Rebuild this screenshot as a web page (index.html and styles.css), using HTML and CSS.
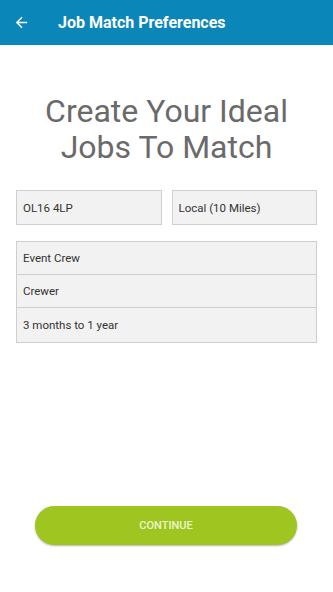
FILE: index.html
```html
<!DOCTYPE html>
<html>
<head>
<meta charset="utf-8">
<link rel="stylesheet" href="styles.css">
</head>
<body>
<div class="screen">
  <header class="appbar">
    <svg class="back" width="16" height="16" viewBox="0 0 24 24"><path d="M20 11H7.83l5.59-5.59L12 4l-8 8 8 8 1.41-1.41L7.83 13H20v-2z" fill="#fff"/></svg>
    <span class="title">Job Match Preferences</span>
  </header>
  <main class="content">
    <h1 class="heading">Create Your Ideal<br>Jobs To Match</h1>
    <div class="row">
      <div class="field">OL16 4LP</div>
      <div class="field">Local (10 Miles)</div>
    </div>
    <div class="group">
      <div class="item">Event Crew</div>
      <div class="item">Crewer</div>
      <div class="item last">3 months to 1 year</div>
    </div>
  </main>
  <div class="footer">
    <button class="continue">CONTINUE</button>
  </div>
</div>
</body>
</html>
```
FILE: styles.css
```css
html, body {
  margin: 0;
  padding: 0;
  background: #ffffff;
}
.screen {
  width: 333px;
  height: 592px;
  display: flex;
  flex-direction: column;
  font-family: Roboto, "Liberation Sans", sans-serif;
}
.appbar {
  height: 45px;
  background: #0b86b9;
  display: flex;
  align-items: center;
  padding-left: 13px;
  box-sizing: border-box;
}
.back {
  width: 17px;
  height: 17px;
}
.title {
  margin-left: 28px;
  color: #ffffff;
  font-family: Roboto, sans-serif;
  font-weight: 700;
  font-size: 16px;
}
.content {
  padding: 0 16px;
  display: flex;
  flex-direction: column;
}
.heading {
  margin: 48px 0 25px;
  text-align: center;
  font-weight: 400;
  font-size: 32px;
  line-height: 36px;
  color: #6a6a6a;
}
.row {
  display: flex;
  gap: 10px;
}
.field {
  flex: 1;
  height: 35px;
  box-sizing: border-box;
  background: #f2f2f2;
  border: 1px solid #cfcfcf;
  display: flex;
  align-items: center;
  padding-left: 6px;
  font-size: 11.5px;
  color: #333333;
}
.group {
  margin-top: 16px;
  border: 1px solid #cfcfcf;
  background: #f2f2f2;
}
.item {
  height: 32px;
  display: flex;
  align-items: center;
  padding-left: 6px;
  border-bottom: 1px solid #cfcfcf;
  font-size: 11.5px;
  color: #333333;
}
.item.last {
  border-bottom: none;
  height: 34px;
}
.footer {
  margin-top: auto;
  padding: 0 36px 47px 35px;
}
.continue {
  width: 100%;
  height: 39px;
  border: none;
  border-radius: 20px;
  background: #9fc520;
  color: #f0f7cf;
  font-family: Roboto, sans-serif;
  font-weight: 500;
  font-size: 11px;
  box-shadow: 0 1px 2px rgba(0,0,0,0.3);
}
```
